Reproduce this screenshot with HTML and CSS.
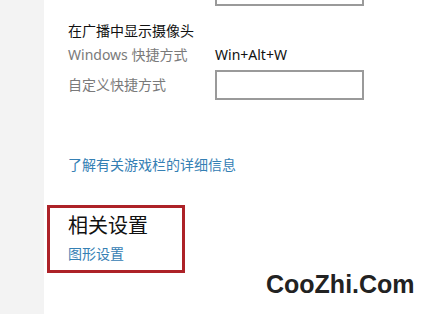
FILE: index.html
```html
<!DOCTYPE html>
<html>
<head>
<meta charset="utf-8">
<link rel="stylesheet" href="styles.css">
</head>
<body>
<div class="page">
  <div class="sidebar"></div>
  <div class="main">
    <div class="row row-cut">
      <span class="label">自定义快捷方式</span>
      <span class="box"></span>
    </div>
    <div class="heading">在广播中显示摄像头</div>
    <div class="row row-text">
      <span class="label">Windows 快捷方式</span>
      <span class="value">Win+Alt+W</span>
    </div>
    <div class="row">
      <span class="label">自定义快捷方式</span>
      <span class="box"></span>
    </div>
    <a class="link more" href="#">了解有关游戏栏的详细信息</a>
    <div class="related">
      <div class="related-title">相关设置</div>
      <a class="link" href="#">图形设置</a>
    </div>
  </div>
</div>
<div class="watermark">CooZhi.Com</div>
</body>
</html>
```
FILE: styles.css
```css
html, body {
  margin: 0;
  padding: 0;
  background: #ffffff;
  overflow: hidden;
}
body {
  width: 447px;
  height: 314px;
  position: relative;
  font-family: "Noto Sans", "Noto Sans CJK SC", sans-serif;
  font-size: 14px;
  color: #111;
}
.page {
  display: flex;
  height: 314px;
}
.sidebar {
  width: 44px;
  flex: none;
  background: #f3f3f3;
}
.main {
  padding-left: 24px;
  display: flex;
  flex-direction: column;
  align-items: flex-start;
}
.row {
  display: flex;
  align-items: center;
  height: 30px;
}
.row-cut {
  margin-top: -24px;
}
.row-text {
  height: 22px;
  margin-top: 3px;
  margin-bottom: 4px;
}
.label {
  width: 147px;
  color: #7a7a7a;
  line-height: 20px;
}
.value {
  color: #111;
  line-height: 20px;
}
.box {
  width: 145px;
  height: 26px;
  border: 2px solid #9a9a9a;
  background: #fff;
}
.heading {
  margin-top: 15px;
  line-height: 20px;
  color: #111;
}
.link {
  color: #3580b4;
  text-decoration: none;
  line-height: 20px;
  display: block;
}
.more {
  margin-top: 55px;
}
.related {
  margin-top: 30px;
  margin-left: -21px;
  width: 114px;
  border: 3px solid #ad2228;
  padding: 5px 0 6px 18px;
}
.related-title {
  font-size: 20px;
  line-height: 26px;
  color: #111;
  margin-bottom: 5px;
}
.watermark {
  position: absolute;
  left: 266px;
  top: 270px;
  font-family: "Liberation Sans", Arial, sans-serif;
  font-weight: bold;
  font-size: 25px;
  color: #222;
}
```
